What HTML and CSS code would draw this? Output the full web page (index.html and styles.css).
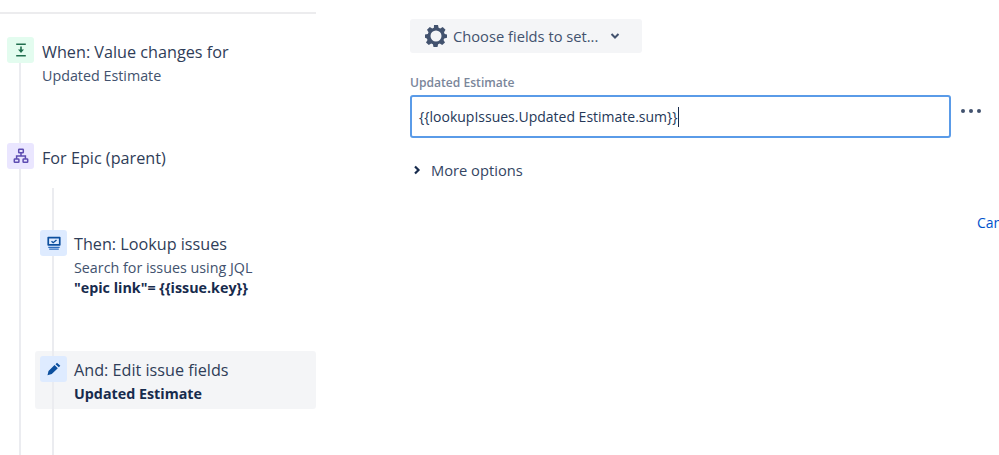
FILE: index.html
```html
<!DOCTYPE html>
<html lang="en">
<head>
<meta charset="utf-8">
<title>Edit issue fields</title>
<link rel="stylesheet" href="styles.css">
</head>
<body>
<div class="page">
  <aside class="rail">
    <div class="rail-top"></div>
    <div class="flow">
      <div class="step step-when">
        <span class="tile tile-green">
          <svg viewBox="0 0 16 16" width="16" height="16"><path d="M3.200 1.600h9.600v1.500H3.200zM3.200 12.900h9.600v1.500H3.200z" fill="#216e4e"/><path d="M7.200 4.600h1.600v3h2.200L8 11 5 7.600h2.200z" fill="#216e4e"/></svg>
        </span>
        <div class="step-text">
          <div class="step-title">When: Value changes for</div>
          <div class="step-sub">Updated Estimate</div>
        </div>
      </div>
      <div class="step step-for">
        <span class="tile tile-purple">
          <svg viewBox="0 0 16 16" width="16" height="16"><g fill="none" stroke="#5e4db2" stroke-width="1.500"><rect x="5.700" y="1.200" width="4.600" height="3.600" rx=".6"/><rect x="1.300" y="10.900" width="4.600" height="3.400" rx=".6"/><rect x="10.100" y="10.900" width="4.600" height="3.400" rx=".6"/><path d="M8 4.800v3.100M3.600 10.900V7.900h8.800v3"/></g></svg>
        </span>
        <div class="step-text">
          <div class="step-title">For Epic (parent)</div>
        </div>
      </div>
      <div class="branch">
        <div class="step step-then">
          <span class="tile tile-blue">
            <svg viewBox="0 0 16 16" width="16" height="16"><path d="M2.200 1.800h11.600a.8.8 0 0 1 .8.8v7.400a.8.8 0 0 1-.8.8H2.200a.8.8 0 0 1-.8-.8V2.600a.8.8 0 0 1 .8-.8zm.9 1.700v5.600h9.800V3.500z" fill="#0c4f9e"/><path d="M5.500 6.200l1.700 1.500 3.300-2.700" fill="none" stroke="#0c4f9e" stroke-width="1.400"/><path d="M2.300 11.800h11.400v1.300H2.300zM3.200 13.500h9.600v1.200H3.200z" fill="#2f6fc0"/></svg>
          </span>
          <div class="step-text">
            <div class="step-title">Then: Lookup issues</div>
            <div class="step-sub">Search for issues using JQL</div>
            <div class="step-strong">"epic link"= {{issue.key}}</div>
          </div>
        </div>
        <div class="step step-and">
          <span class="tile tile-blue">
            <svg viewBox="0 0 16 16" width="16" height="16"><path d="M11 1.700l3.300 3-1.500 1.600-3.300-3.100zM8.500 4.100l3.300 3.100-6 5.900-4.300 1.200 1-4.200z" fill="#0c4f9e"/></svg>
          </span>
          <div class="step-text">
            <div class="step-title">And: Edit issue fields</div>
            <div class="step-strong">Updated Estimate</div>
          </div>
        </div>
      </div>
    </div>
  </aside>
  <main class="editor">
    <button class="picker" type="button">
      <svg class="picker-gear" viewBox="0 0 24 24" width="24" height="24"><path fill-rule="evenodd" d="M10 2h4l.6 2.800 1.700.7 2.400-1.500 2.800 2.800-1.500 2.400.7 1.700L23 11.500v3.300l-2.800.6-.7 1.700 1.500 2.400-2.800 2.600-2.400-1.500-1.700.7-.6 2.700h-4l-.6-2.700-1.700-.7-2.400 1.500-2.800-2.600 1.500-2.400-.7-1.700L1 14.800v-3.300l2.800-.6.700-1.700L3 6.800 5.800 4l2.400 1.500 1.700-.7zM12 7.500a5.500 5.500 0 1 0 0 11 5.500 5.500 0 0 0 0-11z" transform="translate(0 -1)" fill="#42526e"/></svg>
      <span class="picker-label">Choose fields to set...</span>
      <svg class="picker-caret" viewBox="0 0 12 12" width="12" height="12"><path d="M2.500 4l3.500 3.500L9.500 4" fill="none" stroke="#42526e" stroke-width="2"/></svg>
    </button>
    <div class="field-label">Updated Estimate</div>
    <div class="field-row">
      <div class="field-input">{{lookupIssues.Updated Estimate.sum}}<span class="caret"></span></div>
      <div class="dots"><i></i><i></i><i></i></div>
    </div>
    <div class="more">
      <svg viewBox="0 0 10 10" width="10" height="10"><path d="M3 1.500L6.500 5 3 8.500" fill="none" stroke="#172b4d" stroke-width="2.200"/></svg>
      <span>More options</span>
    </div>
    <div class="actions"><a class="cancel">Cancel</a></div>
  </main>
</div>
</body>
</html>
```

FILE: styles.css
```css
html, body {
  margin: 0;
  height: 100%;
  background: #fff;
  overflow: hidden;
}
.page {
  display: flex;
  width: 999px;
  height: 455px;
  overflow: hidden;
  font-family: "Open Sans", "Noto Sans", sans-serif;
  color: #253858;
}
.rail {
  width: 316px;
  flex: none;
  display: flex;
  flex-direction: column;
}
.rail-top {
  height: 2px;
  margin-top: 12px;
  background: #ececee;
}
.flow {
  position: relative;
  flex: 1;
  padding-top: 23px;
}
.flow::before {
  content: "";
  position: absolute;
  left: 19px;
  top: 40px;
  bottom: 0;
  width: 2px;
  background: #ebecf0;
}
.step {
  position: relative;
  display: flex;
  gap: 8px;
}
.step-when {
  padding-left: 7px;
  height: 106px;
}
.step-for {
  padding-left: 7px;
  height: 84px;
}
.branch {
  position: relative;
  padding-left: 35px;
}
.branch::before {
  content: "";
  position: absolute;
  left: 52px;
  top: -39px;
  height: 300px;
  width: 2px;
  background: #ebecf0;
}
.step-then {
  padding-left: 5px;
  height: 124px;
  padding-top: 3px;
  box-sizing: border-box;
}
.step-and {
  padding-left: 5px;
  padding-top: 5px;
  height: 58px;
  box-sizing: border-box;
  background: rgba(235, 236, 240, .55);
  border-radius: 3px;
}
.tile {
  width: 27px;
  height: 26px;
  flex: none;
  display: flex;
  align-items: center;
  justify-content: center;
  border-radius: 3px;
}
.tile-green { background: #e3fcef; }
.tile-purple { background: #eae6ff; }
.tile-blue { background: #deebff; }
.step-text { padding-top: 3px; }
.step-then .step-text,
.step-and .step-text { margin-left: -1px; padding-top: 2px; }
.step-title {
  font-size: 16.200px;
  line-height: 24px;
  color: #2f3d58;
}
.step-sub {
  font-size: 14.300px;
  line-height: 20px;
  color: #42526e;
  margin-top: 2px;
}
.step-strong {
  font-size: 14.300px;
  line-height: 20px;
  font-weight: 700;
  color: #172b4d;
}
.step-and .step-strong { margin-top: 2px; }
.editor {
  flex: none;
  width: 683px;
  padding-left: 94px;
  padding-top: 19px;
  box-sizing: border-box;
}
.picker {
  display: flex;
  align-items: center;
  width: 232px;
  height: 34px;
  padding: 0 0 0 14px;
  border: 0;
  border-radius: 3px;
  background: #f4f5f7;
  font: 500 14.700px "Open Sans", sans-serif;
  color: #42526e;
}
.picker-gear { flex: none; margin-right: 5px; }
.picker-label { white-space: nowrap; }
.picker-caret { margin-left: 11px; flex: none; }
.field-label {
  font-size: 12.100px;
  font-weight: 600;
  line-height: 16px;
  color: #7a869a;
  margin-top: 22px;
}
.field-row {
  display: flex;
  align-items: flex-start;
  gap: 10px;
  margin-top: 4px;
}
.field-input {
  width: 541px;
  height: 43px;
  box-sizing: border-box;
  flex: none;
  border: 2px solid #5a9be8;
  border-radius: 3px;
  padding: 0 7px;
  font-size: 14px;
  line-height: 39px;
  color: #253858;
  display: flex;
  align-items: center;
}
.caret {
  width: 1px;
  height: 20px;
  background: #172b4d;
}
.dots {
  display: flex;
  gap: 4px;
  padding-top: 14px;
}
.dots i {
  width: 4px;
  height: 4px;
  border-radius: 50%;
  background: #42526e;
}
.more {
  display: flex;
  align-items: center;
  gap: 9px;
  margin-top: 22px;
  padding-left: 2px;
  font-size: 14.700px;
  font-weight: 500;
  line-height: 20px;
  color: #344563;
}
.actions {
  margin-top: 31px;
  padding-left: 567px;
  white-space: nowrap;
}
.cancel {
  font-size: 14px;
  line-height: 20px;
  color: #0052cc;
}
```
